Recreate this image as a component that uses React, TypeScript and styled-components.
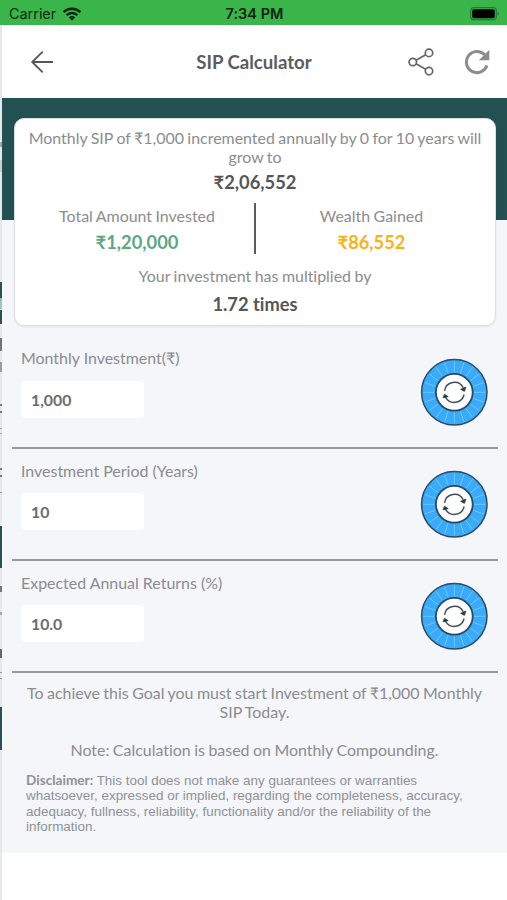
import React from "react";
import styled, { createGlobalStyle } from "styled-components";

const Global = createGlobalStyle`
  * { box-sizing: border-box; }
  html, body { margin: 0; padding: 0; background: #fff; }
  body {
    font-family: Lato, "Liberation Sans", sans-serif;
    font-variant-ligatures: none;
    color: #8b8c8f;
    overflow: hidden;
  }
  p, h1 { margin: 0; }
`;

const Screen = styled.div`
  width: 507px;
  height: 900px;
  display: flex;
  flex-direction: column;
  background: #fff;
`;

const StatusBar = styled.div`
  height: 25px;
  flex: none;
  display: grid;
  grid-template-columns: 1fr auto 1fr;
  align-items: center;
  padding: 2px 7px 0 9px;
  background: #3ab54a;
  color: #0b2a10;
  font-family: Inter, "Liberation Sans", sans-serif;
  font-size: 14.4px;
  line-height: 20px;
`;

const Carrier = styled.div`
  display: flex;
  align-items: center;
  gap: 6px;
`;

const Clock = styled.div`
  font-weight: 600;
  font-size: 14.5px;
  color: #0a230d;
`;

const Battery = styled.svg`
  justify-self: end;
`;

const Layers = styled.div`
  flex: 1;
  display: grid;
  grid-template-columns: 2px 505px;
`;

const PreviousPage = styled.div`
  display: flex;
  flex-direction: column;
  background: #e6e7ea;
`;

const Slice = styled.div<{ $h: number; $c?: string }>`
  height: ${(p) => p.$h}px;
  flex: none;
  background: ${(p) => p.$c ?? "transparent"};
`;

const Page = styled.div`
  display: flex;
  flex-direction: column;
`;

const Header = styled.header`
  height: 73px;
  flex: none;
  display: grid;
  grid-template-columns: 105px 1fr 106px;
  align-items: center;
  background: #fff;
`;

const BackButton = styled.div`
  padding-left: 28px;
  display: flex;
`;

const Title = styled.h1`
  text-align: center;
  font-size: 18.6px;
  line-height: 24px;
  font-weight: 700;
  color: #5b5c5d;
  white-space: nowrap;
`;

const Actions = styled.div`
  display: flex;
  align-items: center;
  gap: 28px;
  padding-left: 7px;
`;

const Content = styled.main`
  height: 755px;
  flex: none;
  padding-top: 20px;
  background: linear-gradient(#235051, #235051) top / 100% 122px no-repeat #f4f6fa;
`;

const Card = styled.section`
  width: 482px;
  height: 208px;
  margin-left: 12px;
  padding-top: 9px;
  border: 1px solid #dcdfe0;
  border-radius: 10px;
  background: #fff;
  box-shadow: 0 1px 2px rgba(0, 0, 0, 0.08);
  text-align: center;
`;

const Copy = styled.p<{ $top?: number }>`
  font-size: 15.95px;
  line-height: 19px;
  word-spacing: -0.6px;
  margin-top: ${(p) => p.$top ?? 0}px;
  text-align: center;
  white-space: nowrap;
`;

const Amount = styled.p<{ $color?: string; $top?: number }>`
  font-size: 18.3px;
  line-height: 24px;
  font-weight: 700;
  color: ${(p) => p.$color ?? "#555657"};
  margin-top: ${(p) => p.$top ?? 0}px;
`;

const Split = styled.div`
  display: grid;
  grid-template-columns: 239px 2px 239px;
  height: 50px;
  margin-top: 9px;
`;

const Divider = styled.div`
  background: #5b5c5e;
`;

const Half = styled.div<{ $shift: number }>`
  padding-left: ${(p) => (p.$shift > 0 ? p.$shift : 0)}px;
  padding-right: ${(p) => (p.$shift < 0 ? -p.$shift : 0)}px;
`;

const Field = styled.section`
  height: 112.3px;
  width: 486px;
  margin-left: 10px;
  padding: 12px 10px 0 9px;
  border-bottom: 2px solid #98999d;
  display: flex;
  justify-content: space-between;
`;

const FieldList = styled.div`
  margin-top: 10.4px;
`;

const Label = styled.label`
  display: block;
  font-size: 15.95px;
  line-height: 19px;
  white-space: nowrap;
`;

const Value = styled.div`
  width: 123px;
  height: 37px;
  margin-top: 13.4px;
  padding-left: 10px;
  border-radius: 4px;
  background: #fff;
  color: #6b6c6e;
  font-size: 15.8px;
  line-height: 38px;
  font-weight: 700;
`;

const DialSvg = styled.svg`
  margin-top: 9.5px;
  flex: none;
`;

const Disclaimer = styled.p`
  margin: 13.6px 0 0 24px;
  font-family: "Liberation Sans", sans-serif;
  font-size: 13.44px;
  line-height: 15.4px;
  color: #8f9195;
  white-space: nowrap;
  b { font-family: Lato, sans-serif; font-size: 13.6px; }
`;

const spokes = Array.from({ length: 20 }, (_, i) => (i * Math.PI) / 10);

function Dial() {
  return (
    <DialSvg width="68" height="68" viewBox="-34.3 -34.3 68 68" fill="none">
      <circle r="32.7" fill="#3aabf9" stroke="#294a64" strokeWidth="1.5" />
      {spokes.map((a) => (
        <line
          key={a}
          x1={Math.cos(a) * 20}
          y1={Math.sin(a) * 20}
          x2={Math.cos(a) * 31}
          y2={Math.sin(a) * 31}
          stroke="#72c6ff"
          strokeWidth="1"
        />
      ))}
      <circle r="18.4" fill="#fff" stroke="#294a64" strokeWidth="1.8" />
      <path d="M-9.8 -1.5A10 10 0 0 1 9 -4.5M9.8 2.2A10 10 0 0 1 -8.8 4.8" stroke="#3e4f5c" strokeWidth="1.4" />
      <path d="M6.3 -3L11.6 -5.2L10.1 -.9ZM-6.1 4.3L-9.9 2L-11.2 5.6Z" fill="#263b4b" stroke="#263b4b" strokeWidth=".8" />
    </DialSvg>
  );
}

const fields = [
  { label: "Monthly Investment(₹)", value: "1,000" },
  { label: "Investment Period (Years)", value: "10" },
  { label: "Expected Annual Returns (%)", value: "10.0" },
];

const slices: [number, string?][] = [
  [117], [5, "#a5a9ab"], [13], [12, "#cdd2d1"], [110],
  [16, "#285553"], [3, "#8ebdb4"], [8, "#9bc5bd"], [1, "#e1e8e8"], [14, "#285553"],
  [14], [13, "#737477"], [11], [10, "#9b9c9f"], [32], [2, "#77797c"], [5], [2, "#77797c"],
  [15], [1, "#aaa"], [4], [1, "#aaa"],
  [34], [2, "#77797c"], [5], [2, "#77797c"], [15], [1, "#999"], [33],
  [42, "#285553"], [18], [6, "#777"], [20], [3, "#aaa"], [34], [9, "#666"], [14], [1, "#999"], [5], [1, "#999"],
  [28], [43, "#285553"],
];

export default function App() {
  return (
    <>
      <Global />
      <Screen>
        <StatusBar>
          <Carrier>
            Carrier
            <svg width="20" height="14" viewBox="0 0 20 14" fill="none">
              <path d="M1.5 5.2C6.2 .6 13.8 .6 18.5 5.2M4.6 8.2C7.6 5.3 12.4 5.3 15.4 8.2" stroke="#06270b" strokeWidth="2.5" />
              <path d="M6.7 10.3C8.6 8.6 11.4 8.6 13.3 10.3L10 13.6Z" fill="#06270b" />
            </svg>
          </Carrier>
          <Clock>7:34 PM</Clock>
          <Battery width="30" height="14" viewBox="0 0 30 14" fill="none">
            <rect x=".7" y=".7" width="25.6" height="12" rx="3.3" stroke="#1f7c2f" strokeWidth="1.2" />
            <rect x="2.2" y="2.2" width="22.6" height="9" rx="1.8" fill="#000" />
            <path d="M27.6 4.6Q30 6.7 27.6 8.8Z" fill="#1f7c2f" />
          </Battery>
        </StatusBar>
        <Layers>
          <PreviousPage>
            {slices.map(([h, c], i) => (
              <Slice key={i} $h={h} $c={c} />
            ))}
          </PreviousPage>
          <Page>
            <Header>
              <BackButton>
                <svg width="24" height="24" viewBox="0 0 24 24" fill="none" stroke="#555658" strokeWidth="1.8">
                  <path d="M23 12H2M12.7 1.7L2.2 12L12.7 22.3" />
                </svg>
              </BackButton>
              <Title>SIP Calculator</Title>
              <Actions>
                <svg width="28" height="28" viewBox="0 0 28 28" fill="none" stroke="#656668" strokeWidth="1.7">
                  <circle cx="4.8" cy="14" r="3.7" />
                  <circle cx="21" cy="4.9" r="3.7" />
                  <circle cx="21" cy="23.1" r="3.7" />
                  <path d="M8 12.2L17.8 6.7M8 15.8L17.8 21.3" />
                </svg>
                <svg width="26" height="26" viewBox="0 0 26 26" fill="none">
                  <path d="M20.6 5.7A10.6 10.6 0 1 0 23 16.6" stroke="#8c8c8c" strokeWidth="3" />
                  <path d="M25.3 .8V11.2H14.8Z" fill="#8c8c8c" />
                </svg>
              </Actions>
            </Header>
            <Content>
              <Card>
                <Copy>
                  Monthly SIP of ₹1,000 incremented annually by 0 for 10 years will
                  <br />
                  grow to
                </Copy>
                <Amount $top={4}>₹2,06,552</Amount>
                <Split>
                  <Half $shift={5}>
                    <Copy $top={3}>Total Amount Invested</Copy>
                    <Amount $color="#59a883" $top={5}>₹1,20,000</Amount>
                  </Half>
                  <Divider />
                  <Half $shift={-8}>
                    <Copy $top={3}>Wealth Gained</Copy>
                    <Amount $color="#fbb116" $top={5}>₹86,552</Amount>
                  </Half>
                </Split>
                <Copy $top={13}>Your investment has multiplied by</Copy>
                <Amount $top={7}>1.72 times</Amount>
              </Card>
              <FieldList>
                {fields.map((f) => (
                  <Field key={f.label}>
                    <div>
                      <Label>{f.label}</Label>
                      <Value>{f.value}</Value>
                    </div>
                    <Dial />
                  </Field>
                ))}
              </FieldList>
              <Copy $top={10}>
                To achieve this Goal you must start Investment of ₹1,000 Monthly
                <br />
                SIP Today.
              </Copy>
              <Copy $top={19}>Note: Calculation is based on Monthly Compounding.</Copy>
              <Disclaimer>
                <b>Disclaimer:</b> This tool does not make any guarantees or warranties
                <br />
                whatsoever, expressed or implied, regarding the completeness, accuracy,
                <br />
                adequacy, fullness, reliability, functionality and/or the reliability of the
                <br />
                information.
              </Disclaimer>
            </Content>
          </Page>
        </Layers>
      </Screen>
    </>
  );
}
